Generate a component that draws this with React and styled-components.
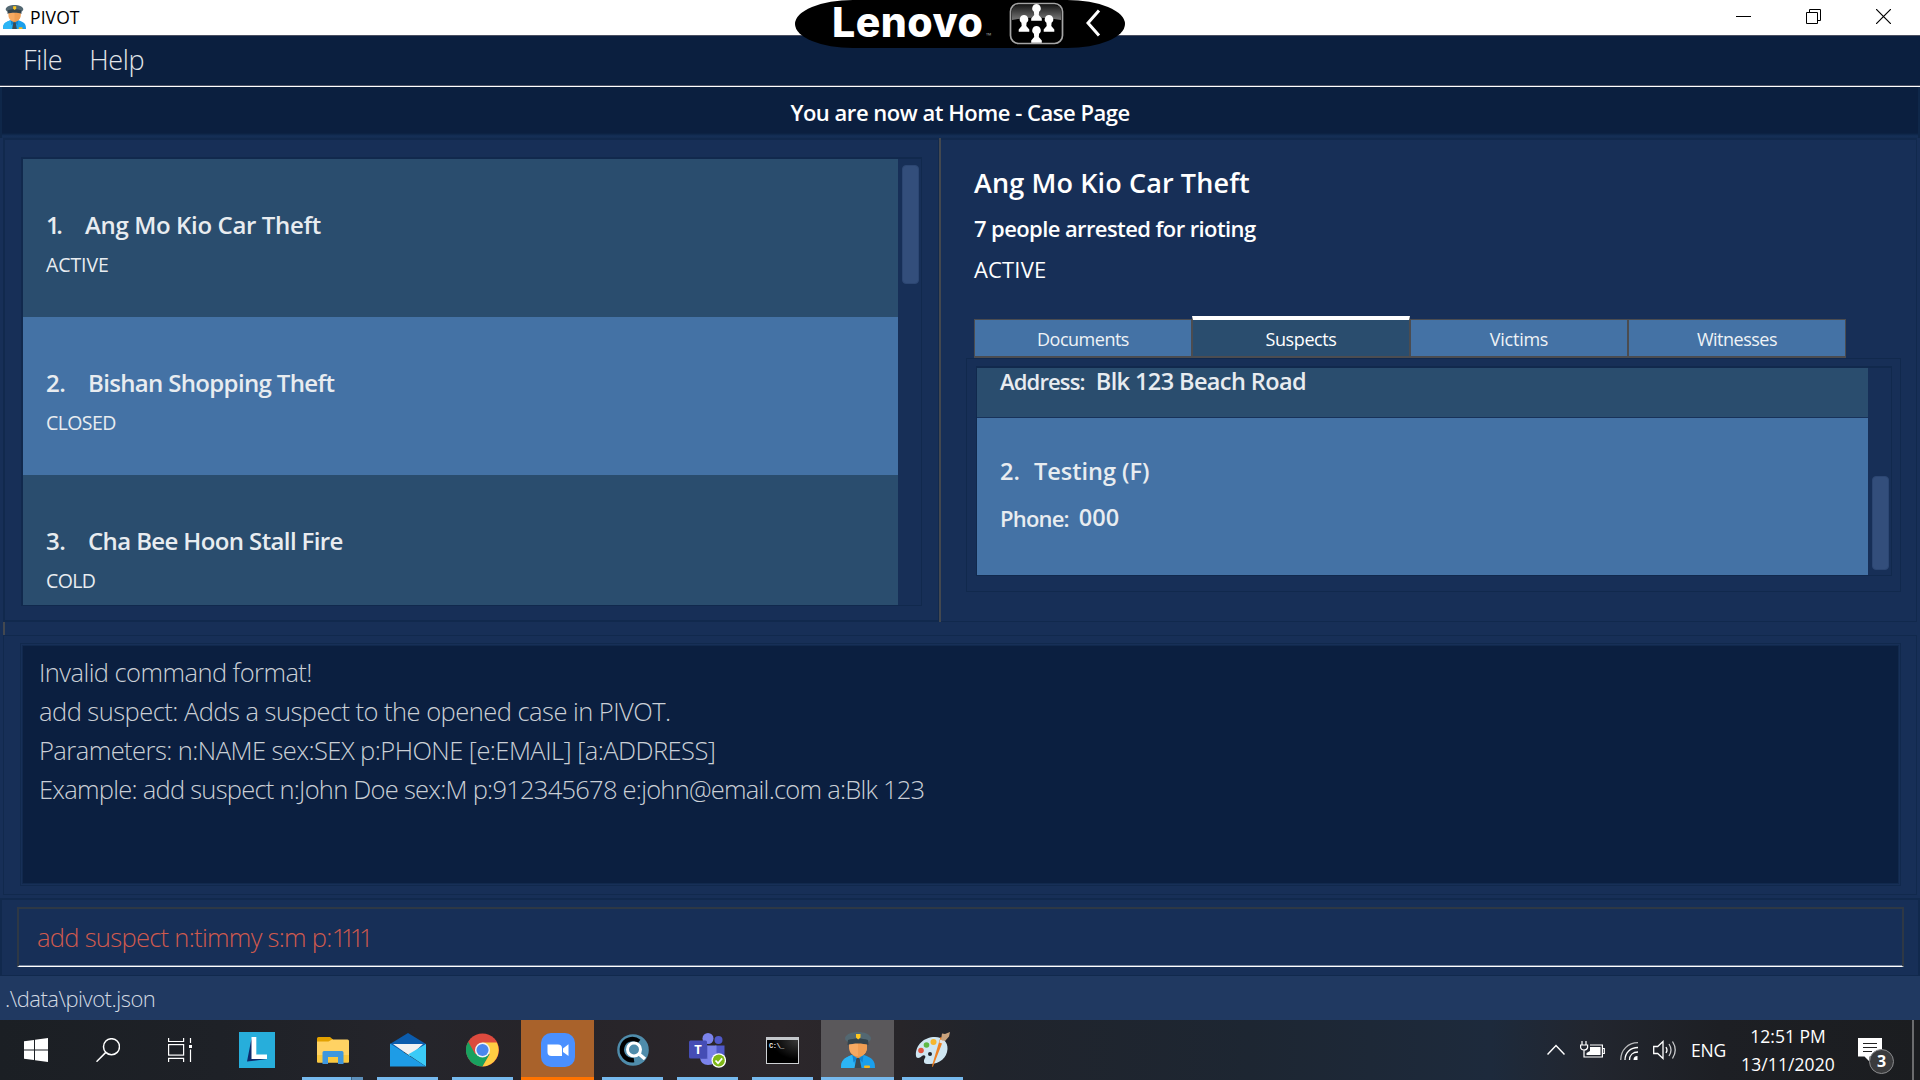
import React from "react";
import styled, { createGlobalStyle, css } from "styled-components";

const color = {
  menu: "#0b1f3f",
  base: "#172f57",
  edge: "#11294d",
  slate: "#2a4d6e",
  steel: "#4472a5",
  status: "#203961",
  thumb: "#334e7b",
  border: "#4b4c50",
};

const GlobalStyle = createGlobalStyle`
  *, *::before, *::after { box-sizing: border-box; }
  body {
    margin: 0;
    overflow: hidden;
    background: ${color.base};
    font-family: "Open Sans", "Noto Sans", sans-serif;
  }
  svg { display: block; }
`;

const Screen = styled.div`
  width: 1920px;
  height: 1080px;
  display: flex;
  flex-direction: column;
  overflow: hidden;
  position: relative;
  background: ${color.base};
`;

const Text = styled.span`
  display: block;
  white-space: pre;
  font-size: ${(p) => p.$size}px;
  font-weight: ${(p) => p.$weight || 400};
  letter-spacing: ${(p) => p.$track || 0}px;
  line-height: ${(p) => p.$line}px;
  color: ${(p) => p.$color || "inherit"};
`;

/* ---------- window chrome ---------- */

const TitleBar = styled.header`
  height: 36px;
  flex: none;
  display: flex;
  align-items: flex-start;
  justify-content: space-between;
  background: #fff;
  border-bottom: 1px solid #4a4f61;
  color: #000;
`;

const TitleLeft = styled.div`
  display: flex;
  padding: 5px 0 0 3px;
  gap: 4px;
`;

const WindowButtons = styled.div`
  display: flex;
  gap: 55px;
  padding: 9px 29px 0 0;
`;

const MenuBar = styled.nav`
  height: 51px;
  flex: none;
  display: flex;
  gap: 27px;
  padding: 5px 0 0 23px;
  background: ${color.menu};
  border-bottom: 1px solid #fff;
  box-shadow: inset 0 -1px 0 #4a5064;
  color: #e3e6ea;
`;

const PageBanner = styled.div`
  height: 51px;
  flex: none;
  display: flex;
  justify-content: center;
  padding-top: 5px;
  background: linear-gradient(#0b1f3f 0 46px, #0d2547 47px, #152f57 49px, #142c52);
  border: solid #0f2749;
  border-width: 0 2px;
  color: #fff;
`;

/* ---------- split area ---------- */

const Split = styled.main`
  height: 484px;
  flex: none;
  display: flex;
  padding: 0 3px;
`;

const LeftPane = styled.section`
  width: 936px;
  padding: 17px 0 0 16px;
  border: 2px solid ${color.edge};
  border-right-width: 1px;
`;

const RightPane = styled.section`
  flex: 1;
  border: solid ${color.edge};
  border-width: 2px 1px 1px 0;
  padding: 17px 0 0 28px;
`;

const Divider = styled.div`
  width: 2px;
  background: #43484f;
`;

const ListFrame = styled.div`
  display: flex;
  width: ${(p) => p.$width}px;
  height: ${(p) => p.$height}px;
  border: 1px solid ${color.edge};
  border-top-width: 2px;
  border-left-width: ${(p) => p.$left}px;
`;

const ListRows = styled.div`
  flex: 1;
  overflow: hidden;
  display: flex;
  flex-direction: column;
`;

const ScrollTrack = styled.div`
  width: 23px;
  display: flex;
  justify-content: flex-end;
  align-items: ${(p) => (p.$end ? "flex-end" : "flex-start")};
  padding: 6px 2px 5px 0;
`;

const ScrollThumb = styled.div`
  width: 17px;
  height: ${(p) => p.$height}px;
  border-radius: 4px;
  background: ${color.thumb};
  border: 1px solid #2c4672;
`;

const CaseRow = styled.article`
  height: 158px;
  flex: none;
  padding: 51px 0 0 23px;
  background: ${(p) => (p.$alt ? color.steel : color.slate)};
  color: #e8ecf0;
`;

const CaseHeading = styled.div`
  display: flex;
`;

const CaseNumber = styled.div`
  width: ${(p) => p.$width}px;
`;

const CaseDetail = styled.div`
  padding-left: 5px;
  color: #fff;
`;

const Tabs = styled.div`
  display: flex;
  align-items: flex-end;
  height: 45px;
  margin: 23px 0 0 5px;
`;

const Tab = styled.div`
  width: 218px;
  height: 39px;
  display: flex;
  justify-content: center;
  padding-top: 3px;
  background: ${color.steel};
  border: 1px solid ${color.border};
  border-width: 1px 1px 2px 1px;
  color: #eef2f6;
  ${(p) =>
    p.$active &&
    css`
      height: 42px;
      background: ${color.slate};
      border-top: 4px solid #fff;
      color: #fff;
    `}
`;

const TabPane = styled.div`
  width: 935px;
  height: 234px;
  margin-left: -3px;
  padding: 7px 0 0 9px;
  border: 1px solid ${color.edge};
`;

const PersonRow = styled.article`
  height: ${(p) => p.$height}px;
  flex: none;
  padding: ${(p) => p.$top}px 0 0 23px;
  background: ${(p) => (p.$alt ? color.steel : color.slate)};
  border-bottom: ${(p) => (p.$alt ? "0" : "1px solid #17325a")};
  color: #e8ecf0;
`;

const Field = styled.div`
  display: flex;
  gap: ${(p) => p.$gap}px;
  margin-top: ${(p) => p.$top || 0}px;
`;

/* ---------- result and command ---------- */

const SplitHandle = styled.div`
  height: 13px;
  flex: none;
  margin-left: 3px;
  border-left: 2px solid #43484f;
`;

const ResultSection = styled.section`
  height: 260px;
  flex: none;
  margin: 0 3px 3px;
  padding: 7px 15px 0 16px;
  border: 1px solid ${color.edge};
`;

const ResultFrame = styled.div`
  height: 243px;
  padding: 1px;
  border: 1px solid ${color.edge};
`;

const ResultBox = styled.div`
  height: 239px;
  padding: 7px 0 0 16px;
  background: #0b1f40;
  border: 1px solid #11294d;
  color: #cacfd6;
`;

const CommandSection = styled.section`
  height: 78px;
  flex: none;
  padding: 7px 14px 0 15px;
  border: 2px solid ${color.edge};
  border-bottom-width: 1px;
`;

const CommandField = styled.div`
  height: 60px;
  display: flex;
  padding: 7px 0 0 18px;
  border: 2px solid #2e3845;
  border-bottom: 1px solid #fff;
  box-shadow: inset 0 -1px 0 #74839c;
  color: #d05a4e;
`;

const StatusBar = styled.footer`
  height: 44px;
  flex: none;
  padding: 4px 0 0 5px;
  background: ${color.status};
  color: #d3d9e2;
`;

/* ---------- taskbar ---------- */

const Taskbar = styled.div`
  height: 60px;
  flex: none;
  display: flex;
  background: linear-gradient(90deg, #1b1f24 0, #1e2127 220px, #25252b 420px, #262429 540px, #2c272b 780px, #272529 900px, #20242c 990px, #1d2632 1250px, #1d2a3c 1490px, #22262f 1590px, #1d1f24 1720px, #1b1d20);
  color: #fff;
`;

const TaskCell = styled.div`
  width: ${(p) => p.$width || 75}px;
  height: 60px;
  display: flex;
  flex-direction: column;
  align-items: center;
  justify-content: space-between;
  padding: 0 ${(p) => p.$shift || 0}px 0 ${(p) => p.$lead || 0}px;
`;

const TaskIcon = styled.div`
  width: ${(p) => (p.$bg ? 73 : 61)}px;
  height: 60px;
  display: flex;
  align-items: center;
  justify-content: center;
  background: ${(p) => p.$bg || "transparent"};
  border-bottom: ${(p) => (p.$line ? `3px solid ${p.$line}` : "0")};
  padding-top: ${(p) => (p.$line ? 3 : 0)}px;
`;

const StackedIcon = styled(TaskIcon)`
  border-image: linear-gradient(90deg, #76b9ed 47px, #3f6382 47px, #3f6382 48px, #5c8fba 48px) 3;
`;

const Spacer = styled.div`
  flex: 1;
`;

const Tray = styled.div`
  display: flex;
  height: 60px;
`;

const TrayItem = styled.div`
  width: ${(p) => p.$width}px;
  padding-top: ${(p) => p.$top || 0}px;
`;

const Clock = styled.div`
  width: 116px;
  margin-right: 4px;
  display: flex;
  flex-direction: column;
  align-items: center;
  padding-top: 2px;
`;

const ShowDesktop = styled.div`
  width: 8px;
  border-left: 2px solid #6b6c6e;
`;

const NotificationIcon = styled.div`
  position: relative;
  width: 62px;
  padding: 18px 0 0 8px;
`;

const Badge = styled.div`
  position: absolute;
  left: 19px;
  top: 29px;
  width: 25px;
  height: 25px;
  border: 1px solid #8a8b8d;
  border-radius: 50%;
  background: #3a3b3d;
  display: flex;
  justify-content: center;
`;

/* ---------- vendor overlay ---------- */

const LenovoPill = styled.div`
  position: absolute;
  left: 795px;
  top: 0;
  width: 330px;
  height: 48px;
  padding-left: 37px;
  display: flex;
  background: #000;
  border-radius: 58px / 24px;
  color: #fff;
`;

const Wordmark = styled.span`
  font-family: Inter, "Open Sans", sans-serif;
  font-size: 41px;
  font-weight: 760;
  letter-spacing: 0.5px;
  line-height: 45px;
  width: 154px;
`;

const TradeMark = styled.span`
  font-size: 7px;
  line-height: 10px;
  padding-top: 31px;
  width: 23px;
  color: #999;
`;

const PillIcon = styled.div`
  padding: ${(p) => p.$top}px ${(p) => p.$gap}px 0 0;
`;

/* ---------- icons ---------- */

const Officer = ({ w, h }) => (
  <svg width={w} height={h} viewBox="0 0 34 36" preserveAspectRatio="none">
    <path d="M0 36c0-8 3-10 11-13h12c8 3 11 5 11 13z" fill="#1a9fec" />
    <path d="M0 36c0-8 3-10 11-13l4 13z" fill="#2cb5f5" />
    <path d="M12 19h10v4.500l-5 3-5-3z" fill="#e08d43" />
    <path d="M14 26h6l-1 2.500L20.500 36h-7L15 28.500z" fill="#3b4a53" />
    <path d="M11.500 23l4.500 3.500-3.500 4zM22.500 23L18 26.500l3.500 4z" fill="#1383cf" />
    <path d="M8 11h18v4c0 6-4 9.500-9 9.500S8 21 8 15z" fill="#f6a961" />
    <path d="M17 11h9v4c0 6-4 9.500-9 9.500z" fill="#ef9d52" />
    <path d="M4 6c1-4 7-6 13-6s12 2 13 6c0 2-1 3-3 4H7C5 9 4 8 4 6z" fill="#536872" />
    <path d="M7 8c6-2 14-2 20 0l.5 5c-6-2-15-2-21 0z" fill="#33434c" />
    <path d="M15 2h4.500v3.500L17.200 7.500 15 5.500z" fill="#ffc81f" />
    <rect x="23" y="33.500" width="6" height="2.500" rx="1" fill="#f5b81c" />
  </svg>
);

const Pawn = ({ x, y }) => (
  <path
    transform={`translate(${x} ${y})`}
    d="M0-8a4.300 4.300 0 0 1 2.600 7.700L2.300 3l3 3.500v2.300h-10.600V6.500l3-3.500-.3-3.300A4.300 4.300 0 0 1 0-8z"
    fill="#fff"
  />
);

const PeopleIcon = () => (
  <svg width="55" height="43" viewBox="0 0 55 43">
    <defs>
      <linearGradient id="gloss" x1="0" y1="0" x2="0" y2="1">
        <stop offset="0" stopColor="#1a1a1a" />
        <stop offset="1" stopColor="#777" />
      </linearGradient>
    </defs>
    <path d="M3 18V9q0-6 7-6h35q7 0 7 6v9q-24-5-49 0z" fill="url(#gloss)" />
    <rect x="1.500" y="1.500" width="52" height="40" rx="8" fill="none" stroke="#a5a5a5" strokeWidth="1.700" />
    <Pawn x={27.5} y={10} />
    <Pawn x={15} y={21} />
    <Pawn x={40} y={21} />
    <Pawn x={27.5} y={32} />
  </svg>
);

const WindowsIcon = () => (
  <svg width="24" height="24" viewBox="0 0 24 24" fill="#fff">
    <path d="M0 3.300 10 2v9.500H0zM11 1.800 24 0v11.500H11zM0 12.500h10V22L0 20.700zM11 12.500h13V24l-13-1.800z" />
  </svg>
);

const SearchIcon = () => (
  <svg width="24" height="24" viewBox="0 0 24 24" fill="none" stroke="#fff" strokeWidth="1.500">
    <circle cx="15.500" cy="8.700" r="8" />
    <path d="M9.800 14.400.5 23.700" />
  </svg>
);

const TaskViewIcon = () => (
  <svg width="24" height="24" viewBox="0 0 24 24" fill="none" stroke="#fff" strokeWidth="1.200">
    <path d="M.6 0v3.500h15V0M.6 24v-3.700h15V24M22.500 0v5M22.500 11.500V24" />
    <rect x=".6" y="6.600" width="15" height="10.500" />
    <rect x="21" y="7" width="3" height="3" fill="#fff" stroke="none" />
  </svg>
);

const LTile = styled.div`
  width: 36px;
  height: 36px;
  background: #27aedb;
`;

const LMark = () => (
  <LTile>
    <svg width="36" height="36" viewBox="0 0 36 36">
      <path d="M12.500 6.500 8 29.500l20-2.500-13-5z" fill="#0d2a6b" />
      <path d="M12.500 5h4.800v17.500H28V27H12.500z" fill="#fff" />
    </svg>
  </LTile>
);

const FolderIcon = () => (
  <svg width="32" height="27" viewBox="0 0 32 27">
    <path d="M0 1.500Q0 0 1.500 0H13l3 2.500V8H0z" fill="#e2a100" />
    <path d="M0 4.500h11.500L15 2.500h15.500Q32 2.500 32 4v20.500q0 1-1 1H1q-1 0-1-1z" fill="#ffd263" />
    <path d="M0 18h32v6.500q0 1-1 1H1q-1 0-1-1z" fill="#fac83e" />
    <path d="M5.500 15.500q0-1.500 1.500-1.500h18q1.500 0 1.500 1.500V27H21v-7H11v7H5.500z" fill="#3f97de" />
  </svg>
);

const MailIcon = () => (
  <svg width="36" height="34" viewBox="0 0 36 34">
    <path d="M0 11 18 0l18 11v8H0z" fill="#0b5cad" />
    <path d="M3 11h30L20 23z" fill="#f1f1f2" />
    <path d="M36 11v22.500L18 21.500z" fill="#3bcbf7" />
    <path d="M0 10.500 36 33.500H0z" fill="#1e9ce6" />
  </svg>
);

const ChromeIcon = () => (
  <svg width="33" height="34" viewBox="0 0 48 48">
    <circle cx="24" cy="24" r="24" fill="#dc4a3e" />
    <path d="M3.200 12A24 24 0 0 0 24 48L34.400 30 24 24 13.600 30z" fill="#19a15f" />
    <path d="M44.800 13H24V24l10.400 6L24 48A24 24 0 0 0 44.800 13z" fill="#ffcd42" />
    <circle cx="24" cy="24" r="11" fill="#f3f3f3" />
    <circle cx="24" cy="24" r="8.800" fill="#4a86ee" />
  </svg>
);

const ZoomIcon = () => (
  <svg width="34" height="34" viewBox="0 0 34 34">
    <rect width="34" height="34" rx="10" fill="#4a90ff" />
    <path d="M6.500 11.500H17q4 0 4 4V23H10.500q-4 0-4-4z" fill="#fff" />
    <path d="M22 15.500l5.500-4.200V23L22 19z" fill="#fff" />
  </svg>
);

const CSearchIcon = () => (
  <svg width="32" height="32" viewBox="0 0 32 32" fill="none">
    <circle cx="16" cy="16" r="15.800" fill="#4f8cab" />
    <path d="M22 7.500A10.500 10.500 0 1 0 17 26" stroke="#000" strokeWidth="4.500" />
    <circle cx="17" cy="15.500" r="6.500" stroke="#fff" strokeWidth="3" />
    <path d="M21.500 19.500 28 25" stroke="#fff" strokeWidth="3.500" />
  </svg>
);

const TeamsBox = styled.div`
  position: relative;
  width: 37px;
  height: 35px;
`;

const TeamsLetter = styled.span`
  position: absolute;
  left: 0;
  top: 7px;
  width: 18px;
  text-align: center;
  font: 700 13px/19px "Open Sans", sans-serif;
  color: #fff;
`;

const TeamsIcon = () => (
  <TeamsBox>
    <svg width="37" height="35" viewBox="0 0 37 35">
      <circle cx="29.500" cy="7" r="4" fill="#5059c9" />
      <path d="M26 12.500h9.500V23q0 4-5 5l-4.500-2z" fill="#5059c9" />
      <circle cx="19" cy="5.500" r="5.500" fill="#7b83eb" />
      <path d="M11 12.500h16.500V23q0 9-8.500 9-7 0-8-7z" fill="#7b83eb" />
      <path d="M11 12.500h7.500V26H11z" fill="#5d64c6" />
      <rect x="0" y="7.500" width="18" height="18" rx="1.500" fill="#454db5" />
      <circle cx="29.800" cy="27.500" r="7.300" fill="#fff" />
      <circle cx="29.800" cy="27.500" r="6" fill="#7fb818" />
      <path d="M26.500 27.500l2.500 2.700 4.200-4.800" fill="none" stroke="#fff" strokeWidth="1.700" />
    </svg>
    <TeamsLetter>T</TeamsLetter>
  </TeamsBox>
);

const ConsoleBox = styled.div`
  width: 33px;
  height: 27px;
  padding: 2px 0 0 2px;
  border: 1px solid #cfd2d5;
  border-top: 3px solid #c3c7cb;
  background: radial-gradient(ellipse at 100% 0, #3a3a3a, #000 60%);
  font: 700 7px/8px "Liberation Mono", monospace;
  letter-spacing: -0.5px;
  color: #e6e6e6;
  white-space: pre;
`;

const PaintIcon = () => (
  <svg width="36" height="36" viewBox="0 0 36 36">
    <path d="M1 24C0 13 9 5 20 5c8 0 13 5 12.500 12C32 26 24 33 12 32c-3 0-4-3-2-6 1.500-2-1-4-3-2-2.500 2.500-5.800 2.500-6 0z" fill="#cfe6f2" />
    <circle cx="15" cy="22" r="2" fill="#20242c" />
    <circle cx="6" cy="18.500" r="2.800" fill="#e2553f" />
    <circle cx="11.500" cy="13" r="2.800" fill="#5db845" />
    <circle cx="18.500" cy="10" r="3" fill="#f6b62c" />
    <path d="M29 6.500 18 34.500l-1 .5.500-3L25.500 5z" fill="#ee8123" />
    <path d="M26 8l1-6.500 3 .5 5-2-1 4.500-4 4.500z" fill="#c9a27c" />
    <path d="M25.300 7.500l4.500 2-1.500 2.500-4-1.600z" fill="#dfe3e6" />
  </svg>
);

const BLUE = "#76b9ed";

const cases = [
  { no: "1.", gap: 39, title: "Ang Mo Kio Car Theft", status: "ACTIVE", track: -0.36, sTrack: -0.1, nTrack: -3.5 },
  { no: "2.", gap: 42, title: "Bishan Shopping Theft", status: "CLOSED", track: -0.66, sTrack: -0.6, nTrack: -0.5 },
  { no: "3.", gap: 42, title: "Cha Bee Hoon Stall Fire", status: "COLD", track: -0.62, sTrack: -0.6, nTrack: -0.5 },
];

const tabs = [
  { name: "Documents", track: -0.5 },
  { name: "Suspects", track: -0.4 },
  { name: "Victims", track: -0.25 },
  { name: "Witnesses", track: -0.5 },
];

const resultLines = [
  { text: "Invalid command format!", track: -0.56 },
  { text: "add suspect: Adds a suspect to the opened case in PIVOT.", track: -0.53 },
  { text: "Parameters: n:NAME sex:SEX p:PHONE [e:EMAIL] [a:ADDRESS]", track: -0.55 },
  { text: "Example: add suspect n:John Doe sex:M p:912345678 e:john@email.com a:Blk 123", track: -0.75 },
];

const apps = [
  { id: "files", icon: <FolderIcon />, line: BLUE, stack: true },
  { id: "mail", icon: <MailIcon />, line: BLUE },
  { id: "chrome", icon: <ChromeIcon />, line: BLUE },
  { id: "zoom", icon: <ZoomIcon />, line: "#ff7300", bg: "#a9622b" },
  { id: "csearch", icon: <CSearchIcon />, line: BLUE },
  { id: "teams", icon: <TeamsIcon />, line: BLUE },
  { id: "console", icon: <ConsoleBox>C:\_</ConsoleBox>, line: BLUE },
  { id: "pivot", icon: <Officer w={34} h={36} />, line: BLUE, bg: "#5a585b" },
  { id: "paint", icon: <PaintIcon />, line: BLUE },
];

export default function App() {
  return (
    <Screen>
      <GlobalStyle />
      <TitleBar>
        <TitleLeft>
          <Officer w={23} h={24} />
          <Text $size={17.5} $line={25} $track={0.1}>PIVOT</Text>
        </TitleLeft>
        <WindowButtons>
          <svg width="15" height="15"><path d="M0 7.500h15" stroke="#000" /></svg>
          <svg width="15" height="15" fill="none" stroke="#000">
            <path d="M.5 3.500h11v11H.5zM3.500 3V.5h11v11H12" />
          </svg>
          <svg width="15" height="15"><path d="M0 0l15 15M15 0L0 15" stroke="#000" strokeWidth="1.200" /></svg>
        </WindowButtons>
      </TitleBar>

      <MenuBar>
        <Text $size={27} $line={38} $weight={300} $track={-0.35}>File</Text>
        <Text $size={27} $line={38} $weight={300} $track={-0.35}>Help</Text>
      </MenuBar>

      <PageBanner>
        <Text $size={22} $line={41} $weight={540} $track={-0.48}>You are now at Home - Case Page</Text>
      </PageBanner>

      <Split>
        <LeftPane>
          <ListFrame $width={901} $height={449} $left={2}>
            <ListRows>
              {cases.map((c, i) => (
                <CaseRow key={c.no} $alt={i % 2 === 1}>
                  <CaseHeading>
                    <CaseNumber $width={c.gap}>
                      <Text $size={24} $line={30} $weight={560} $track={c.nTrack}>{c.no}</Text>
                    </CaseNumber>
                    <Text $size={24} $line={30} $weight={560} $track={c.track}>{c.title}</Text>
                  </CaseHeading>
                  <Text $size={19.5} $line={50} $track={c.sTrack}>{c.status}</Text>
                </CaseRow>
              ))}
            </ListRows>
            <ScrollTrack>
              <ScrollThumb $height={119} />
            </ScrollTrack>
          </ListFrame>
        </LeftPane>
        <Divider />
        <RightPane>
          <CaseDetail>
            <Text $size={27} $line={51} $weight={560} $track={0.12}>Ang Mo Kio Car Theft</Text>
            <Text $size={22} $line={41} $weight={560} $track={-0.6}>7 people arrested for rioting</Text>
            <Text $size={22} $line={41} $weight={520} $track={0.15}>ACTIVE</Text>
          </CaseDetail>
          <Tabs>
            {tabs.map((t, i) => (
              <Tab key={t.name} $active={i === 1}>
                <Text $size={18} $line={32} $track={t.track}>{t.name}</Text>
              </Tab>
            ))}
          </Tabs>
          <TabPane>
            <ListFrame $width={916} $height={210} $left={1}>
              <ListRows>
                <PersonRow $height={50} $top={0}>
                  <Field $gap={11}>
                    <Text $size={22} $line={27} $weight={540} $track={-0.85}>Address:</Text>
                    <Text $size={23.5} $line={26} $weight={560} $track={-0.6}>Blk 123 Beach Road</Text>
                  </Field>
                </PersonRow>
                <PersonRow $alt $height={158} $top={38}>
                  <Field $gap={14}>
                    <Text $size={23.5} $line={30} $weight={560}>2.</Text>
                    <Text $size={23.5} $line={30} $weight={560} $track={0}>Testing (F)</Text>
                  </Field>
                  <Field $gap={10} $top={16}>
                    <Text $size={22} $line={33} $weight={540} $track={-0.8}>Phone:</Text>
                    <Text $size={23.5} $line={30} $weight={560} $track={0}>000</Text>
                  </Field>
                </PersonRow>
              </ListRows>
              <ScrollTrack $end>
                <ScrollThumb $height={94} />
              </ScrollTrack>
            </ListFrame>
          </TabPane>
        </RightPane>
      </Split>

      <SplitHandle />

      <ResultSection>
        <ResultFrame>
          <ResultBox>
            {resultLines.map((l) => (
              <Text key={l.text} $size={25.5} $line={39.15} $weight={325} $track={l.track}>{l.text}</Text>
            ))}
          </ResultBox>
        </ResultFrame>
      </ResultSection>

      <CommandSection>
        <CommandField>
          <Text $size={25.5} $line={42} $weight={300} $track={-0.7}>add suspect n:timmy s:m p:</Text>
          <Text $size={25.5} $line={42} $weight={300} $track={-5.5}>1111</Text>
        </CommandField>
      </CommandSection>

      <StatusBar>
        <Text $size={22} $line={37} $weight={300} $track={-0.5}>{".\\data\\pivot.json"}</Text>
      </StatusBar>

      <Taskbar>
        <TaskCell $width={72}><TaskIcon><WindowsIcon /></TaskIcon></TaskCell>
        <TaskCell $width={72}><TaskIcon><SearchIcon /></TaskIcon></TaskCell>
        <TaskCell $width={72}><TaskIcon><TaskViewIcon /></TaskIcon></TaskCell>
        <TaskCell $width={80} $lead={2}><TaskIcon><LMark /></TaskIcon></TaskCell>
        {apps.map((a) => (
          <TaskCell key={a.id} $shift={2}>
            {a.stack ? (
              <StackedIcon $line={a.line}>{a.icon}</StackedIcon>
            ) : (
              <TaskIcon $bg={a.bg} $line={a.line}>{a.icon}</TaskIcon>
            )}
          </TaskCell>
        ))}
        <Spacer />
        <Tray>
          <TrayItem $width={33} $top={24}>
            <svg width="18" height="12" fill="none" stroke="#fff" strokeWidth="1.500"><path d="M.5 10.500 9 1.500l8.500 9" /></svg>
          </TrayItem>
          <TrayItem $width={40} $top={21}>
            <svg width="25" height="17" fill="none" stroke="#fff" strokeWidth="1.200">
              <path d="M2 0v4M6 0v4M.6 4h7v2.500Q7 9 4 9T.6 6.500zM4 9v7h18.400V4H10M22.500 7.500h1.800v5h-1.800" />
              <path d="M6.500 12V14h14V6H10v4z" fill="#fff" stroke="none" />
            </svg>
          </TrayItem>
          <TrayItem $width={33} $top={22}>
            <svg width="19" height="19" fill="none" stroke="#fff" strokeWidth="1.300">
              <path d="M.7 18C.7 8 8 .7 18 .7" stroke="#b9babc" />
              <path d="M5 18C5 10.500 10.500 5.500 18 5.500M9.500 18C9.500 13 13 10 18 10" />
              <path d="M13.500 18q0-4 4-4v4z" fill="#fff" stroke="none" />
            </svg>
          </TrayItem>
          <TrayItem $width={38} $top={20}>
            <svg width="24" height="20" fill="none" stroke="#fff" strokeWidth="1.300">
              <path d="M.7 6.500h4L10 1.500v17l-5.300-5H.7z" />
              <path d="M13 7q2 3 0 6" />
              <path d="M16 4q4 6 0 12M19.500 1.500q5.500 8.500 0 17" stroke="#c9cacc" />
            </svg>
          </TrayItem>
          <TrayItem $width={39} $top={15}>
            <Text $size={17.5} $line={30} $track={-0.2}>ENG</Text>
          </TrayItem>
          <Clock>
            <Text $size={17.5} $line={28}>12:51 PM</Text>
            <Text $size={17.5} $line={28} $track={0.1}>13/11/2020</Text>
          </Clock>
          <NotificationIcon>
            <svg width="24" height="24">
              <path d="M0 0h24v18.500H11.500v5L6.500 18.500H0z" fill="#fff" />
              <path d="M5 5.500h14M5 9.500h14M5 13.500h9" stroke="#222" />
            </svg>
            <Badge><Text $size={16} $line={23} $weight={700}>3</Text></Badge>
          </NotificationIcon>
          <ShowDesktop />
        </Tray>
      </Taskbar>

      <LenovoPill>
        <Wordmark>Lenovo</Wordmark>
        <TradeMark>™</TradeMark>
        <PillIcon $top={2} $gap={21}><PeopleIcon /></PillIcon>
        <PillIcon $top={9} $gap={0}>
          <svg width="16" height="28" fill="none" stroke="#fff" strokeWidth="3"><path d="M14 1.500 3 14l11 12.500" /></svg>
        </PillIcon>
      </LenovoPill>
    </Screen>
  );
}
